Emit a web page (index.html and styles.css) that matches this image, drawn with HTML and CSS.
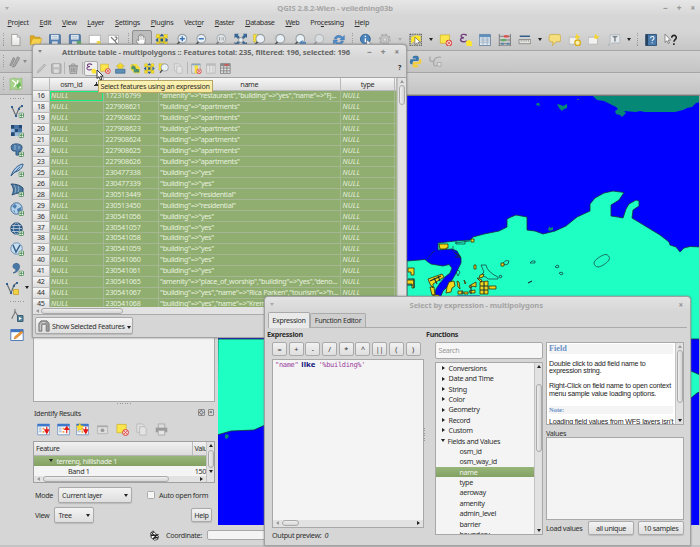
FILE: index.html
```html
<!DOCTYPE html>
<html lang="en">
<head>
<meta charset="utf-8">
<title>QGIS 2.8.2-Wien - veiledning03b</title>
<link rel="stylesheet" href="styles.css">
</head>
<body>
<svg class="defs" aria-hidden="true">
  <defs>
    <linearGradient id="sheet" x2="0" y2="1"><stop offset="0" stop-color="#fff"/><stop offset="1" stop-color="#e4e4e2"/></linearGradient>
    <symbol id="plus" viewBox="0 0 6 6"><rect x=".5" y=".5" width="5" height="5" rx="1" fill="#fff" stroke="#468a52"/><path d="M3 1.3v3.4M1.3 3h3.4" stroke="#3c8248"/></symbol>
    <symbol id="no" viewBox="0 0 8 8"><circle cx="4" cy="4" r="3.4" fill="#f4d4d0" stroke="#d8322e"/><path d="M2 2l4 4M6 2L2 6" stroke="#d8322e" stroke-width=".8"/></symbol>
    <symbol id="doc" viewBox="0 0 14 14"><path d="M2.5 1h6l3 3v9h-9z" fill="url(#sheet)" stroke="#8d8f8c" stroke-width=".8"/><path d="M8.5 1v3h3" fill="#ddd" stroke="#8d8f8c" stroke-width=".6"/></symbol>
    <symbol id="folder" viewBox="0 0 14 14"><path d="M1 12V2.5h4l1 1.5h5.500v2" fill="#e0a91c" stroke="#b78a12" stroke-width=".6"/><path d="M1 12l2.500-6.500h10L11.500 12z" fill="#f7d34f" stroke="#c39a1c" stroke-width=".6"/></symbol>
    <symbol id="save" viewBox="0 0 14 14"><rect x="1" y="1" width="12" height="12" rx="1" fill="#5580ae" stroke="#365f8e" stroke-width=".7"/><rect x="3" y="1.500" width="8" height="5" fill="#edf2f7"/><path d="M4 3h6M4 5h6" stroke="#8da2b8" stroke-width=".7"/><rect x="4" y="8.500" width="6" height="4.500" fill="#d7dee6"/></symbol>
    <symbol id="saveas" viewBox="0 0 14 14"><use href="#save"/><path d="M9 8h5v5H9z" fill="#5ea66c"/></symbol>
    <symbol id="saveg" viewBox="0 0 14 14"><rect x="1" y="1" width="12" height="12" rx="1" fill="#bcbcbc" stroke="#999"/><rect x="3.500" y="1.500" width="7" height="4" fill="#ddd"/><rect x="4" y="8" width="6" height="4.500" fill="#ddd"/></symbol>
    <symbol id="page" viewBox="0 0 14 14"><path d="M1 2h12v9H1z" fill="#fff" stroke="#999" stroke-width=".7"/><path d="M9 8h4v4H9z" fill="#f1d74a"/></symbol>
    <symbol id="pagetool" viewBox="0 0 14 14"><path d="M1 2h11v9H1z" fill="#fff" stroke="#999" stroke-width=".7"/><path d="M4 4l4 4M8 4c2-1 3 1 2 2L8 8l3 4" fill="none" stroke="#777" stroke-width="1.300"/></symbol>
    <symbol id="hand" viewBox="0 0 14 14"><path d="M4 13L1 8c0-1.500 1.500-1.500 2.500.2V3c0-1.300 1.600-1.300 1.600 0V1.800c0-1.300 1.700-1.300 1.700 0v.7c.3-1.200 1.800-1 1.800.3V4c.5-1 1.900-.6 1.900.6V9l-1 4z" fill="#fff" stroke="#777" stroke-width=".8"/><path d="M5.100 3v4M6.900 2.500V7M8.700 3.500V7" stroke="#888" stroke-width=".5"/></symbol>
    <symbol id="pansel" viewBox="0 0 14 14"><path d="M1 1h4v4H1zM9 1h4v4H9zM1 9h4v4H1zM9 9h4v4H9zM4 4h6v6H4z" fill="#f6df2c" stroke="#b9a11b" stroke-width=".4"/><path d="M7 0l2.500 3h-5zM7 14l2.500-3h-5zM0 7l3-2.500v5zM14 7l-3-2.500v5z" fill="#315d8d"/><path d="M5.500 5.500h3v3h-3z" fill="#27537f"/></symbol>
    <symbol id="glass" viewBox="0 0 14 14"><circle cx="7.500" cy="5.700" r="4.700" fill="#e9f1f7" stroke="#98a0a5" stroke-width="1.200"/><path d="M4.500 9L1.500 12.500" stroke="#555" stroke-width="1.800"/></symbol>
    <symbol id="zin" viewBox="0 0 14 14"><use href="#glass"/><path d="M7.500 3v5.400M4.800 5.700h5.400" stroke="#3a75b7" stroke-width="1.600"/></symbol>
    <symbol id="zout" viewBox="0 0 14 14"><use href="#glass"/><path d="M4.800 5.700h5.400" stroke="#3a75b7" stroke-width="1.600"/></symbol>
    <symbol id="zone" viewBox="0 0 14 14"><use href="#glass" opacity=".65"/><path d="M5.500 4v3.500M9.500 4v3.500M7.500 4.500v.7M7.500 6.500v.7" stroke="#888" stroke-width=".9"/></symbol>
    <symbol id="zfull" viewBox="0 0 14 14"><path d="M0 0h5L3.700 1.700 6 4 4 6 1.700 3.700 0 5zM14 0H9l1.300 1.700L8 4l2 2 2.300-2.300L14 5zM0 14h5l-1.300-1.700L6 10 4 8l-2.300 2.300L0 9zM14 14H9l1.300-1.700L8 10l2-2 2.300 2.300L14 9z" fill="#3a6795"/><circle cx="7" cy="7" r="2.500" fill="#e9f1f7" stroke="#999"/></symbol>
    <symbol id="zsel" viewBox="0 0 14 14"><path d="M0 1h8v8H0z" fill="#f6e12f" stroke="#c2a61b" stroke-dasharray="1 1"/><use href="#glass"/></symbol>
    <symbol id="zlay" viewBox="0 0 14 14"><path d="M0 1h3v8H0z" fill="#ccc"/><use href="#glass"/></symbol>
    <symbol id="zlast" viewBox="0 0 14 14"><use href="#glass"/><path d="M6 10l4-3v2h4v3h-4v1.500z" fill="#5488c0"/></symbol>
    <symbol id="refresh" viewBox="0 0 14 14"><path d="M2 6c1-5 7-5 9-2l2-2v5H8l1.500-1.500C8 3.500 5 4 4.500 6zM12 8c-1 5-7 5-9 2l-2 2V7h5L4.500 8.500C6 10.500 9 10 9.500 8z" fill="#4e8bc8" stroke="#3b70a5" stroke-width=".4"/></symbol>
    <symbol id="ident" viewBox="0 0 14 14"><circle cx="6.500" cy="6" r="5.300" fill="#4c82ba" stroke="#356797"/><path d="M6.500 5v4.500M6.500 2.500v1.400" stroke="#fff" stroke-width="1.500"/><path d="M8 7l5 4-2.500.3L12 14l-1 .2-1.200-2.500L8 13z" fill="#fff" stroke="#666" stroke-width=".5"/></symbol>
    <symbol id="gear" viewBox="0 0 14 14"><circle cx="7" cy="6.500" r="4.400" fill="none" stroke="#b1b1b1" stroke-width="1.800"/><circle cx="7" cy="6.500" r="5.900" fill="none" stroke="#aaa" stroke-width="1.200" stroke-dasharray="2 2.600"/><circle cx="7" cy="6.500" r="2" fill="#ddd" stroke="#aaa"/></symbol>
    <symbol id="select" viewBox="0 0 14 14"><path d="M.6.6h12.800v12.800H.6z" fill="#bcbcb4" stroke="#333" stroke-dasharray="1.500 1"/><path d="M2 4l5-2 5 1v6H4l-2 2z" fill="#fbe526"/><path d="M6 4l6 5.500-2.800.2L11 13l-1.500.7-1.500-3.500L6 12z" fill="#fff" stroke="#444" stroke-width=".6"/></symbol>
    <symbol id="desel" viewBox="0 0 14 14"><path d="M1 1.500h10v9H1z" fill="#fbe64b" stroke="#cbac24" stroke-width=".7"/><use href="#no" x="6.500" y="6.500" width="7.500" height="7.500"/></symbol>
    <symbol id="eps" viewBox="0 0 14 14"><path d="M8 2C5-.2 1.300 1 2 3.300c.3 1 1.500 1.300 3 1.200C2.500 4.500 1 5.500 1.300 7c.4 2 4 2.700 6.700.8" fill="none" stroke="#75407f" stroke-width="1.500"/><path d="M7 8.500l3.500-1.500L14 9v4.500H8z" fill="#fbe52e"/></symbol>
    <symbol id="grid" viewBox="0 0 14 14"><path d="M1 1h12v12H1z" fill="#e8eff5" stroke="#67809a"/><path d="M1 1h12v3H1z" fill="#5f8fbd"/><path d="M2 6h10M2 8h10M2 10h10M5 4v9M9.500 4v9" stroke="#8ea4b9" stroke-width=".8"/></symbol>
    <symbol id="abacus" viewBox="0 0 14 14"><path d="M1 .5v13M13 .5v13M1 3h12M1 7h12M1 11h12M0 13.300h14" fill="none" stroke="#77777a"/><path d="M6 2h5v2.300H6z" fill="#dd4d4b"/><path d="M3 6h5v2.300H3z" fill="#60aa68"/><path d="M3 10h3v2H3zM9 10h3v2H9z" fill="#5889ad"/></symbol>
    <symbol id="ruler" viewBox="0 0 14 14"><path d="M1.500 3h11" stroke="#335f8b" stroke-width="1.500"/><path d="M.7 6.500h12.600v4.500H.7z" fill="#e4e4df" stroke="#777" stroke-width=".8"/><path d="M3 7v2M5 7v1.500M7 7v2M9 7v1.500M11 7v2" stroke="#777" stroke-width=".6"/></symbol>
    <symbol id="bubble" viewBox="0 0 14 14"><path d="M3 1h8q2.300 0 2.300 2.300v3.200Q13.300 9 11 9H8l-3.500 4L5 9H3Q.8 9 .8 6.500V3.300Q.8 1 3 1z" fill="#f5de7d" stroke="#c9a83b" stroke-width=".8"/></symbol>
    <symbol id="bookm" viewBox="0 0 14 14"><path d="M1 4h10v7.500H1z" fill="#f1f1ef" stroke="#aaa" stroke-width=".7"/><path d="M9 0l1.500 2.500 2.500 1-3 2.500-3-1z" fill="#f5d532"/></symbol>
    <symbol id="bookn" viewBox="0 0 14 14"><use href="#bookm"/><circle cx="10" cy="10" r="3" fill="#f8efb1" stroke="#d8ae1a" stroke-width="1.400"/></symbol>
    <symbol id="anno" viewBox="0 0 14 14"><path d="M3 1.500h10.500v8.700H5L.8 13 3 9.500z" fill="#e6eaed" stroke="#a2adb5" stroke-width=".8"/><path d="M5.700 3.500h5M8.200 3.500V8.500" stroke="#555e66" stroke-width="1.200"/></symbol>
    <symbol id="book" viewBox="0 0 14 14"><path d="M1.500 1h11.500v12H1.500z" fill="#4b7cae" stroke="#294d73"/><path d="M1.500 1h2.500v12H1.500z" fill="#27425f"/><path d="M6.700 5c0-2.500 4-2.200 3.700 0 0 1.500-2 1.500-2 3M8.400 9.500v1" fill="none" stroke="#fff" stroke-width="1.100"/></symbol>
    <symbol id="what" viewBox="0 0 14 14"><path d="M.7.7v9l2-1.800 1.500 3 1.300-.7-1.500-3h2.800z" fill="#fff" stroke="#555" stroke-width=".7"/><path d="M8 4.500C8 1 13 1.300 12.800 4.500c0 2-2.500 2.300-2.500 4.500M10.300 10.500v1.800" fill="none" stroke="#222" stroke-width="1.700"/></symbol>
    <symbol id="pen" viewBox="0 0 14 14"><path d="M2 12.500l1-3L11 1.300l1.500 1.500L5 11z" fill="#c7c7c7" stroke="#a1a1a1" stroke-width=".9"/></symbol>
    <symbol id="pens" viewBox="0 0 14 14"><path d="M1 11L5 2l2 1-4 8zM4 13L10 1l2.500 1.500L7 12z" fill="#aaa" stroke="#888"/></symbol>
    <symbol id="trash" viewBox="0 0 14 14"><path d="M2 4h10l-1 9.500H3z" fill="#bbb" stroke="#888"/><path d="M1 3.500h12M5 3V1.300h4V3M5 6v5.500M7 6v5.500M9 6v5.500" fill="none" stroke="#888"/></symbol>
    <symbol id="top" viewBox="0 0 14 14"><path d="M1 8h12v5H1z" fill="#5d8eb5" stroke="#456f91"/><path d="M4 7V4H2l5-4 5 4h-2v3z" fill="#f4d82b" stroke="#b89b15" stroke-width=".5"/></symbol>
    <symbol id="inv" viewBox="0 0 14 14"><path d="M1 2l7-1 5 5v7H6L1 8z" fill="#f1db3b"/><path d="M2 4h5v4h5v4H5V8H2z" fill="#4b9370"/><path d="M3 2l8 9" stroke="#38746a"/></symbol>
    <symbol id="copy" viewBox="0 0 14 14"><path d="M2 1h6l2 2v7H2z" fill="#eee" stroke="#999"/><path d="M5 4h5l2 2v7H5z" fill="#f4f4f4" stroke="#999"/></symbol>
    <symbol id="coldel" viewBox="0 0 14 14"><path d="M1 1h11v12H1z" fill="#ddd" stroke="#aaa"/><path d="M5 1h4v12H5z" fill="#f3dd39"/><path d="M1 1h11v2H1z" fill="#86a8c5"/><use href="#no" x="7" y="7" width="7" height="7"/></symbol>
    <symbol id="coladd" viewBox="0 0 14 14"><path d="M1 1h11v12H1z" fill="#e4e4e4" stroke="#b5b5b5"/><path d="M1 1h11v2.500H1z" fill="#bbb"/><path d="M5 3v10M9 3v10" stroke="#bbb"/></symbol>
    <symbol id="calc" viewBox="0 0 14 14"><path d="M.8.8h12.400v12.400H.8z" fill="#e5e5e5" stroke="#777"/><path d="M1 1h12v3H1z" fill="#8a8a8a"/><path d="M6 1.500h5v2H6z" fill="#d8504c"/><path d="M1 6.500h12M1 10h12M5 4v9M9 4v9" stroke="#777"/></symbol>
    <symbol id="mapi" viewBox="0 0 14 14"><path d="M1 2l4-1 4 1 4-1v11l-4 1-4-1-4 1z" fill="#a8d38a" stroke="#8fb57b" stroke-width=".6"/><path d="M3 3l4 3-2 4M9 3l-1 5 4 3" fill="none" stroke="#fff" stroke-width="1.200"/><path d="M7 8l4-3 1 3-3 4z" fill="#68b259"/></symbol>
    <symbol id="vec" viewBox="0 0 14 14"><path d="M2 3l4 9 3-8 3-2" fill="none" stroke="#666d74" stroke-width="1.200"/><path d="M1 2h2v2H1zM5 11h2v2H5zM8 4h2v2H8zM11 1h2v2h-2z" fill="#315f92"/></symbol>
    <symbol id="vecadd" viewBox="0 0 14 14"><use href="#vec"/><use href="#plus" x="8.500" y="8.500" width="5.500" height="5.500"/></symbol>
    <symbol id="rasadd" viewBox="0 0 14 14"><path d="M1 1h11v11H1z" fill="#9bbbdc"/><path d="M1 1h3.700v3.700H1zM8.300 1H12v3.700H8.300zM4.700 4.700h3.600v3.600H4.700zM1 8.300h3.700V12H1z" fill="#234b75"/><path d="M4.700 1h3.600v3.700H4.700zM8.300 4.700H12v3.600H8.300z" fill="#4474a8"/><use href="#plus" x="8.500" y="8.500" width="5.500" height="5.500"/></symbol>
    <symbol id="pgadd" viewBox="0 0 14 14"><path d="M2 2c3-2 8-1 9.500.5C13 5 11 8 10 9l-1-1v4H6V8H3C1 7 .7 3 2 2z" fill="#4e7ba9" stroke="#31577f"/><path d="M5 2v5M9 3v3" stroke="#b3cbe0" stroke-width=".7"/><use href="#plus" x="8.500" y="8.500" width="5.500" height="5.500"/></symbol>
    <symbol id="feather" viewBox="0 0 14 14"><path d="M1 13C3 7 7 2 13 1c0 4-4 7-9 8.500z" fill="#a7c7e4" stroke="#315d8b"/><path d="M1 13L10 4" stroke="#315d8b" stroke-width=".8"/><use href="#plus" x="8.500" y="8.500" width="5.500" height="5.500"/></symbol>
    <symbol id="mssql" viewBox="0 0 14 14"><path d="M1 1c5 0 9 1 12 4v6c-3-2-6-1-11 1 2-4 2-7-1-11z" fill="#4b789f" stroke="#284f75"/><path d="M4 2c2 3 2 5 1 8M8 3c1 2 1 4 0 6" fill="none" stroke="#a7c0d5" stroke-width=".7"/><use href="#plus" x="8.500" y="8.500" width="5.500" height="5.500"/></symbol>
    <symbol id="globe" viewBox="0 0 14 14"><circle cx="6.500" cy="6.500" r="5.700" fill="#b6d2eb" stroke="#466f99"/><path d="M2 4l3-2 2 2-2 3zM7 7l4-2v4l-3 2zM3 8l2 1v2z" fill="#4f80b1"/><use href="#plus" x="8.500" y="8.500" width="5.500" height="5.500"/></symbol>
    <symbol id="globed" viewBox="0 0 14 14"><circle cx="6.500" cy="6.500" r="5.700" fill="#315f8d" stroke="#294e72"/><path d="M1 6.500h11M2 3.500h9M2 9.500h9" stroke="#d7e3ed" stroke-width=".7"/><ellipse cx="6.500" cy="6.500" rx="3" ry="5.500" fill="none" stroke="#d7e3ed" stroke-width=".6"/><use href="#plus" x="8.500" y="8.500" width="5.500" height="5.500"/></symbol>
    <symbol id="globev" viewBox="0 0 14 14"><circle cx="6.500" cy="6.500" r="5.700" fill="#c9deef" stroke="#6f93b5"/><path d="M3 3l3 7 4-7" fill="none" stroke="#345f8b" stroke-width="1.500"/><use href="#plus" x="8.500" y="8.500" width="5.500" height="5.500"/></symbol>
    <symbol id="comma" viewBox="0 0 14 14"><path d="M4 2c4-2 7 1 5 5-1 2-3 4-6 4 2-1 3-2 3-4C3 7 2 4 4 2z" fill="#4878a8" stroke="#31597f" stroke-width=".6"/><use href="#plus" x="8.500" y="8.500" width="5.500" height="5.500"/></symbol>
    <symbol id="vecnew" viewBox="0 0 14 14"><use href="#vec"/><path d="M8.500 8.500h5v5h-5z" fill="#f2d245" stroke="#c2a12b" stroke-width=".8"/></symbol>
    <symbol id="gps" viewBox="0 0 14 14"><path d="M2 11c0-4 3-3 3-9M5 2c0 4 2 3 4 8" fill="none" stroke="#777" stroke-width="1.100"/><circle cx="5" cy="2" r="1.300" fill="#aaa"/><path d="M7.500 7.500H13v6H7.500z" fill="#58849a" stroke="#3b6173"/><path d="M9 9l3 1.500-3 1.500z" fill="#fff"/></symbol>
    <symbol id="edit" viewBox="0 0 14 14"><path d="M.8 1.500h12.400v11H.8z" fill="#fff" stroke="#5580ba"/><path d="M1 1.500h12v2.700H1z" fill="#4076c2"/><path d="M4 11l1-2.500L11.500 3 13 4.500 6.500 10z" fill="#f09a35" stroke="#ba6918" stroke-width=".5"/></symbol>
    <symbol id="python" viewBox="0 0 14 14"><path d="M7 .8c-3 0-3 1-3 3h3.500v.8H2C.5 5 .5 10 2.500 10H4V8c0-1 1-1.500 2-1.500h3c1 0 1.500-.5 1.500-1.500V3C10.500 1 9 .8 7 .8z" fill="#3c77ab"/><path d="M7 13.500c3 0 3-1 3-3H7v-.8h5c1.800-.5 1.800-5.500 0-5.700h-1v2c0 1-1 1.500-2 1.500H6C5 7.500 4 8 4 9v2.500c0 1.500 1 2 3 2z" fill="#f3ce42"/></symbol>
    <symbol id="route" viewBox="0 0 14 14"><path d="M1 1.500v4c0 2 5 2 5 0s3-4 7-3M5 5v5c0 2 2 2 4 1" fill="none" stroke="#aaa" stroke-width="1.400"/><path d="M9 8h4v4H9z" fill="#ddd" stroke="#aaa"/></symbol>
    <symbol id="tree" viewBox="0 0 14 14"><path d="M.7 1.300h12.600v11.400H.7z" fill="#fff" stroke="#7a9bc8"/><path d="M.5 1h13v2.700H.5z" fill="#3d78cb"/><path d="M2 5.500h3M2 7.500h3M2 9.500h3" stroke="#8da5c5"/><path d="M6 5h2v2H6zM6 8.500h2v2H6z" fill="#f09942"/></symbol>
    <symbol id="expand" viewBox="0 0 14 14"><use href="#tree"/><path d="M10.500 4v4M8.500 7.500h4l-2 3.500z" stroke="#e21919" stroke-width="1.300" fill="#e21919"/></symbol>
    <symbol id="collapse" viewBox="0 0 14 14"><use href="#tree"/><path d="M10.500 11V7M8.500 7h4l-2-3z" stroke="#e21919" stroke-width="1.300" fill="#e21919"/></symbol>
    <symbol id="star" viewBox="0 0 14 14"><use href="#expand"/><path d="M4 0l1.300 3 3 .2L6 5.300l.8 3L4 6.700 1.500 8.300l.7-3L0 3.300 3 3z" fill="#ffe12b" stroke="#e1b911" stroke-width=".5"/></symbol>
    <symbol id="form" viewBox="0 0 14 14"><path d="M1.500 3h11v8.500h-11z" fill="#ddd" stroke="#b5b5b5"/><path d="M1.500 3h11v1.500h-11z" fill="#aaa"/><circle cx="7" cy="7.800" r="2" fill="#999"/></symbol>
    <symbol id="print" viewBox="0 0 14 14"><path d="M3.500 1h7v5h-7z" fill="#ddd" stroke="#aaa"/><path d="M.8 5h12.400v5H.8z" fill="#9b9b9b"/><path d="M3.500 8h7v5h-7z" fill="#e4e4e4" stroke="#aaa"/></symbol>
    <symbol id="mouse" viewBox="0 0 14 14"><path d="M2 4l3-3 7 7-1 4-4 1-4-3z" fill="#fff" stroke="#222"/><path d="M3 3l8 8M6 2L3 7l8-1-6 5 7-2" fill="none" stroke="#222" stroke-width="1.300"/></symbol>
    <symbol id="filter" viewBox="0 0 14 14"><path d="M1 13V4l2.500-3h7L13 4v9H9.500V6.500L8.500 5h-3L4.500 6.500V13z" fill="#999" stroke="#777"/><path d="M2.700 12V5l2-2h4" fill="none" stroke="#ddd"/></symbol>
  </defs>
</svg>

<div class="app">
  <header class="titlebar">
    <i class="tri dim"></i><span class="title">QGIS 2.8.2-Wien - veiledning03b</span>
    <span class="wm"><b>−</b><b>+</b><b>×</b></span>
  </header>
  <nav class="menu">
    <span><u>P</u>roject</span><span><u>E</u>dit</span><span><u>V</u>iew</span><span><u>L</u>ayer</span><span><u>S</u>ettings</span><span><u>P</u>lugins</span><span>Vect<u>o</u>r</span><span><u>R</u>aster</span><span><u>D</u>atabase</span><span><u>W</u>eb</span><span>Pro<u>c</u>essing</span><span><u>H</u>elp</span>
  </nav>
  <div class="bar main-bar">
    <i class="grip"></i>
    <svg class="ic"><use href="#doc"/></svg><svg class="ic"><use href="#folder"/></svg><svg class="ic"><use href="#save"/></svg><svg class="ic"><use href="#saveas"/></svg><svg class="ic"><use href="#page"/></svg><svg class="ic"><use href="#pagetool"/></svg>
    <i class="grip wide"></i>
    <svg class="ic pressed"><use href="#hand"/></svg><svg class="ic"><use href="#pansel"/></svg><svg class="ic"><use href="#zin"/></svg><svg class="ic"><use href="#zout"/></svg><svg class="ic"><use href="#zone"/></svg><svg class="ic"><use href="#zfull"/></svg><svg class="ic"><use href="#zsel"/></svg><svg class="ic"><use href="#zlay"/></svg><svg class="ic"><use href="#zlast"/></svg><svg class="ic faded"><use href="#glass"/></svg><svg class="ic"><use href="#refresh"/></svg>
    <i class="grip mid"></i>
    <svg class="ic"><use href="#ident"/></svg><svg class="ic"><use href="#gear"/></svg><i class="drop dim"></i>
    <svg class="ic"><use href="#select"/></svg><i class="drop"></i>
    <svg class="ic"><use href="#desel"/></svg><svg class="ic"><use href="#eps"/></svg><svg class="ic"><use href="#grid"/></svg><svg class="ic"><use href="#abacus"/></svg><svg class="ic"><use href="#ruler"/></svg><i class="drop"></i>
    <svg class="ic"><use href="#bubble"/></svg><svg class="ic"><use href="#bookn"/></svg><svg class="ic"><use href="#bookm"/></svg><svg class="ic"><use href="#anno"/></svg><i class="drop"></i>
    <i class="grip mid"></i>
    <svg class="ic"><use href="#book"/></svg><svg class="ic"><use href="#what"/></svg>
  </div>
  <div class="bar edit-bar"><i class="grip"></i><svg class="ic"><use href="#pens"/></svg><i class="tri"></i><span class="plugins"><svg class="ic"><use href="#python"/></svg><svg class="ic"><use href="#route"/></svg></span></div>
  <div class="bar label-bar"><i class="grip"></i><svg class="ic"><use href="#mapi"/></svg></div>

  <div class="work">
    <aside class="layers-bar">
      <i class="hgrip"></i>
      <svg class="ic"><use href="#vecadd"/></svg><svg class="ic"><use href="#rasadd"/></svg><svg class="ic"><use href="#pgadd"/></svg><svg class="ic"><use href="#feather"/></svg><svg class="ic"><use href="#mssql"/></svg><svg class="ic"><use href="#globe"/></svg><svg class="ic"><use href="#globed"/></svg><svg class="ic"><use href="#globev"/></svg><svg class="ic"><use href="#comma"/></svg>
      <span class="with-drop"><svg class="ic"><use href="#vecnew"/></svg><i class="drop"></i></span>
      <i class="hgrip low"></i>
      <svg class="ic"><use href="#gps"/></svg><svg class="ic"><use href="#edit"/></svg>
    </aside>
    <section class="side">
      <div class="layers"></div>
      <i class="hgrip split"></i>
      <div class="dock-title"><span>Identify Results</span><i>◇</i><i>×</i></div>
      <div class="dock-tools"><svg class="ic"><use href="#expand"/></svg><svg class="ic"><use href="#collapse"/></svg><svg class="ic"><use href="#star"/></svg><svg class="ic"><use href="#form"/></svg><svg class="ic"><use href="#desel"/></svg><svg class="ic faded"><use href="#copy"/></svg><svg class="ic"><use href="#print"/></svg></div>
      <div class="results">
        <div class="r-main">
          <div class="r-head"><span>Feature</span><span>Valu</span></div>
          <div class="r-row on"><i class="tri"></i><span>terreng, hilllshade 1</span></div>
          <div class="r-row band"><span>Band 1</span><span>150</span></div>
          <div class="hscroll"><i class="la"></i><b></b><i class="ra"></i></div>
        </div>
        <div class="vscroll"><i class="ua"></i><b></b><i class="da"></i></div>
      </div>
      <div class="form-row"><span>Mode</span><span class="combo mode">Current layer<i class="drop"></i></span><i class="check"></i><span>Auto open form</span></div>
      <div class="form-row"><span class="lv">View</span><span class="combo view">Tree<i class="drop"></i></span><span class="btn help">Help</span></div>
    </section>
    <svg class="map" viewBox="218 95 481 429" preserveAspectRatio="none">
      <rect x="218" y="95" width="482" height="430" fill="#0000fe"/>
      <path d="M593 95L597 99L604 100L616 106L618 108L615 110L616 113L620 114L622 116L626 112L624 110L636 111L640 110L645 111H675L683 109L687 107L692 106L696 102L700 101V95zM557 103l4 1 2 1 4-2 0 4-3 1-2 2-3-3zM537 102l2 0 1 3-4-1zM577 98h2v.8h-2z" fill="#068877"/>
      <path d="M218 338H407V260L425 258.500L428 261L431 263L443 265L449 263.500L452 267L450 272L445 276L440 282L436 288L435 292L437 297H440L443 290L449 284L455 274L461 262V257L457 250L452 248L438 249V242L455 240L470 239L473 236L484 233L499 230L507 226V218L511 216L516 214L527 216V229L535 230L543 233L555 230L566 225L577 216L590 210V203L595 197L604 192L613 190L624 191.500L619 199L611 204V215L618 216L623 217L626 208L629 203L636 199L639 200V205L633 209L632 217L637 220L660 234L669 241L670 244L676 246L680 251L684 247L690 245.500L702 246V338H691L680 345V368L691 370L698 373L702 376V390L697 392L691 397L600 400L265 424L254 429L231 430L217 434z" fill="#1effc3" stroke="#14343c" stroke-width=".8" stroke-linejoin="round"/>
      <path d="M427 258L433 251L435 250.500M594 262C594 259 603 253 606 253.500C609 254 610 257 609 259C607 262 601 266 598 266C596 266 594 264 594 262zM481 264L486 264L487 267L489 270L494 274L498 276V278H488L486 276L480 275L484 271zM503 262L506 259.500L509 260L508 263L505 264zM530 262L532 260L535 260V262zM555 266L557 264L559 265L558 267zM559 272L562 271L563 273L561 274zM499 275L501 274L502 276L500 277zM456 271L458 269L460 271L458 275zM455 242L470 240M453 245V250L457 254L460 256M456 240V243H465V240" fill="none" stroke="#14343c" stroke-width=".7"/>
      <path d="M548 228l2-3v2l3-1 0 3-4 1z" fill="#068877"/>
      <g fill="#f2d91c" stroke="#352d09" stroke-width=".8">
        <path d="M439 243h9v4h-2v1h-6zM471 238h3v3h-3zM474 264h2v4h-2zM501 262h3v3h-3zM408 267h6v7h-3v-3h-3zM407 279h7v8h-2v-4h-5zM428 278l14-5 2 3-11 7v4l-3-4zM430 286h4l1 8h-3zM449 281l5-1 1 5-3 2-1 4-5 1 1-6zM457 280l2 1 1 7-2-2zM464 279l2 3-1 1zM469 285l7-4v5l-3-1-3 2zM458 290h5v3h-5zM464 291h4v2h-4zM469 290l6-1v3h-5zM480 281l8-1v13h-8zM489 285h7v3h-7zM477 277l5 2-1 2zM480 274l4-1-1 3-4 1zM433 294h6v2h-6z"/>
      </g>
      <path d="M455 252l5 3M455 256h6M408 278h6v9M430 280l11-5M434 277l3 6M438 275l2 5M484 281v12M480 285h8M480 289h8M471 284v9M462 290v3M528 282l4-2M407 284h6" fill="none" stroke="#1b3035" stroke-width="1.100"/>
      <path d="M457 294.500h23v2h-23z" fill="#1428b8"/>
      <path d="M225 434l2-1 2 2-2 3-2-1z" fill="#068877"/>
    </svg>
  </div>
  <footer class="status"><svg class="ic"><use href="#mouse"/></svg><span>Coordinate:</span><i class="field"></i></footer>
</div>

<section class="win attr">
  <div class="win-title"><i class="tri"></i><span>Attribute table - multipolygons :: Features total: 235, filtered: 196, selected: 196</span><span class="wm"><b>−</b><b>+</b><b>×</b></span></div>
  <div class="attr-tools">
    <svg class="ic"><use href="#pen"/></svg><svg class="ic"><use href="#saveg"/></svg><i class="sep"></i><svg class="ic"><use href="#trash"/></svg><i class="sep"></i><svg class="ic lit"><use href="#eps"/></svg><svg class="ic"><use href="#desel"/></svg><svg class="ic"><use href="#top"/></svg><svg class="ic"><use href="#inv"/></svg><svg class="ic"><use href="#pansel"/></svg><svg class="ic"><use href="#zsel"/></svg><svg class="ic faded"><use href="#copy"/></svg><i class="sep"></i><svg class="ic"><use href="#coldel"/></svg><svg class="ic"><use href="#coladd"/></svg><svg class="ic"><use href="#calc"/></svg><span class="q">?</span>
  </div>
  <div class="table-wrap">
    <div class="table-view">
      <table>
        <colgroup><col class="c0"><col class="c1"><col class="c2"><col class="c3"><col class="c4"><col></colgroup>
        <thead><tr><th></th><th class="sorted"><span>osm_id</span></th><th></th><th>name</th><th>type</th><th></th></tr></thead>
        <tbody>
          <tr><th>16</th><td class="focus"><em>NULL</em></td><td>172316799</td><td>"amenity"=&gt;"restaurant","building"=&gt;"yes","name"=&gt;"Fj...</td><td><em>NULL</em></td><td></td></tr>
          <tr><th>18</th><td><em>NULL</em></td><td>227908621</td><td>"building"=&gt;"apartments"</td><td><em>NULL</em></td><td></td></tr>
          <tr><th>19</th><td><em>NULL</em></td><td>227908622</td><td>"building"=&gt;"apartments"</td><td><em>NULL</em></td><td></td></tr>
          <tr><th>20</th><td><em>NULL</em></td><td>227908623</td><td>"building"=&gt;"apartments"</td><td><em>NULL</em></td><td></td></tr>
          <tr><th>21</th><td><em>NULL</em></td><td>227908624</td><td>"building"=&gt;"apartments"</td><td><em>NULL</em></td><td></td></tr>
          <tr><th>22</th><td><em>NULL</em></td><td>227908625</td><td>"building"=&gt;"apartments"</td><td><em>NULL</em></td><td></td></tr>
          <tr><th>23</th><td><em>NULL</em></td><td>227908626</td><td>"building"=&gt;"apartments"</td><td><em>NULL</em></td><td></td></tr>
          <tr><th>25</th><td><em>NULL</em></td><td>230477338</td><td>"building"=&gt;"yes"</td><td><em>NULL</em></td><td></td></tr>
          <tr><th>26</th><td><em>NULL</em></td><td>230477339</td><td>"building"=&gt;"yes"</td><td><em>NULL</em></td><td></td></tr>
          <tr><th>28</th><td><em>NULL</em></td><td>230513449</td><td>"building"=&gt;"residential"</td><td><em>NULL</em></td><td></td></tr>
          <tr><th>29</th><td><em>NULL</em></td><td>230513450</td><td>"building"=&gt;"residential"</td><td><em>NULL</em></td><td></td></tr>
          <tr><th>36</th><td><em>NULL</em></td><td>230541056</td><td>"building"=&gt;"yes"</td><td><em>NULL</em></td><td></td></tr>
          <tr><th>37</th><td><em>NULL</em></td><td>230541057</td><td>"building"=&gt;"yes"</td><td><em>NULL</em></td><td></td></tr>
          <tr><th>38</th><td><em>NULL</em></td><td>230541058</td><td>"building"=&gt;"yes"</td><td><em>NULL</em></td><td></td></tr>
          <tr><th>39</th><td><em>NULL</em></td><td>230541059</td><td>"building"=&gt;"yes"</td><td><em>NULL</em></td><td></td></tr>
          <tr><th>40</th><td><em>NULL</em></td><td>230541060</td><td>"building"=&gt;"yes"</td><td><em>NULL</em></td><td></td></tr>
          <tr><th>41</th><td><em>NULL</em></td><td>230541061</td><td>"building"=&gt;"yes"</td><td><em>NULL</em></td><td></td></tr>
          <tr><th>42</th><td><em>NULL</em></td><td>230541065</td><td>"amenity"=&gt;"place_of_worship","building"=&gt;"yes","deno...</td><td><em>NULL</em></td><td></td></tr>
          <tr><th>44</th><td><em>NULL</em></td><td>230541067</td><td>"building"=&gt;"yes","name"=&gt;"Rica Parken","tourism"=&gt;"h...</td><td><em>NULL</em></td><td></td></tr>
          <tr><th>45</th><td><em>NULL</em></td><td>230541068</td><td>"building"=&gt;"yes","name"=&gt;"Krem</td><td></td><td></td></tr>
        </tbody>
      </table>
    </div>
    <div class="vscroll"><i class="ua"></i><b></b></div>
  </div>
  <div class="hscroll"><i class="la"></i><b></b></div>
  <div class="attr-foot"><span class="btn show"><svg class="ic"><use href="#filter"/></svg><span>Show Selected Features</span><i class="drop"></i></span></div>
</section>

<div class="tooltip">Select features using an expression</div>
<svg class="cursor" viewBox="0 0 8 12"><path d="M1 1v8.500l2-1.800 1.400 3.300 1.500-.7-1.400-3.100h2.700z" fill="#fff" stroke="#222" stroke-width=".9"/></svg>

<section class="win expr">
  <div class="win-title inactive"><i class="tri dim"></i><span>Select by expression - multipolygons</span><span class="wm"><b>×</b></span></div>
  <div class="tabs"><span class="tab on">Expression</span><span class="tab">Function Editor</span></div>
  <div class="expr-body">
    <div class="col-a">
      <h3>Expression</h3>
      <div class="ops"><span>=</span><span>+</span><span>-</span><span>/</span><span>*</span><span>^</span><span>||</span><span>(</span><span>)</span></div>
      <div class="editor"><div class="code"><span>"name"</span><b>like</b><span>'%building%'</span></div><div class="hscroll"><i class="la"></i><b></b><i class="ra"></i></div></div>
      <div class="preview">Output preview: &nbsp;<em>0</em></div>
    </div>
    <i class="vgrip"></i>
    <div class="col-b">
      <h3>Functions</h3>
      <div class="search">Search</div>
      <div class="fn">
        <ul>
          <li>Conversions</li><li>Date and Time</li><li>String</li><li>Color</li><li>Geometry</li><li>Record</li><li>Custom</li><li class="open">Fields and Values</li>
          <li class="leaf">osm_id</li><li class="leaf">osm_way_id</li><li class="leaf on">name</li><li class="leaf">type</li><li class="leaf">aeroway</li><li class="leaf">amenity</li><li class="leaf">admin_level</li><li class="leaf">barrier</li><li class="leaf">boundary</li>
        </ul>
        <div class="vscroll"><i class="ua"></i><b></b><i class="da"></i></div>
      </div>
    </div>
    <div class="col-c">
      <div class="doc">
        <div class="doc-text"><h4>Field</h4><p>Double click to add field name to<br>expression string.</p><p>Right-Click on field name to open context<br>menu sample value loading options.</p><h5>Note:</h5><p>Loading field values from WFS layers isn't</p></div>
        <div class="vscroll"><i class="ua"></i><b></b><i class="da"></i></div>
      </div>
      <div class="v-label">Values</div>
      <div class="values"></div>
      <div class="load"><span>Load values</span><span class="btn">all unique</span><span class="btn">10 samples</span></div>
    </div>
  </div>
</section>
</body>
</html>
```
FILE: styles.css
```css
* { box-sizing: border-box; }
body { margin: 0; width: 700px; height: 547px; overflow: hidden; position: relative; background: #d6d6d6; color: #303030; font: 7.2px/10px "Noto Sans", "Open Sans", sans-serif; letter-spacing: -.32px; white-space: nowrap; }
i { font-style: normal; display: block; flex: none; }
.defs { position: absolute; width: 0; height: 0; }
.ic { display: block; flex: none; width: 12px; height: 12px; }
.faded { opacity: .45; }
u { text-underline-offset: 1px; text-decoration-thickness: .6px; }

.tri, .drop { width: 0; height: 0; border: 2.2px solid transparent; border-top: 3px solid #888; border-bottom: 0; }
.drop { border-top-color: #222; }
.dim { border-top-color: #aaa; }
.grip { width: 2px; height: 14px; background: repeating-linear-gradient(#999 0 1px, transparent 1px 2.300px); background-size: 1px 100%; background-repeat: no-repeat; }
.hgrip { width: 14px; height: 1px; background: repeating-linear-gradient(90deg, #999 0 1px, transparent 1px 2.600px); }

.app { height: 547px; display: flex; flex-direction: column; }
.titlebar { height: 15px; background: linear-gradient(#e6e6e6, #d7d7d7); display: flex; align-items: center; padding: 1px 5px 0; color: #a6a6a6; font-weight: bold; font-size: 7.600px; letter-spacing: -.11px; }
.title { flex: 1; text-align: center; padding-right: 2px; }
.wm { display: flex; gap: 9px; color: #999; font: bold 8px/10px "Noto Sans", sans-serif; }
.wm b { width: 4.600px; text-align: center; letter-spacing: 0; }
.menu { height: 15px; display: flex; padding: 1px 0 0 7.500px; gap: 10.850px; line-height: 12px; }
.bar { display: flex; align-items: center; background: linear-gradient(#d4d4d4, #c4c4c4); border-bottom: 1px solid #a6a6a6; flex: none; }
.main-bar { height: 21px; padding: 0 0 1px 3px; background: linear-gradient(#d6d6d6, #c6c6c6); }
.main-bar .ic { width: 19.700px; padding: 3.500px 3.200px; height: 20px; }
.main-bar .grip { margin-right: 1px; }
.main-bar .grip.wide { margin: 0 2px 0 4px; }
.main-bar .grip.mid { margin: 0 2px 0 3px; }
.main-bar .drop { margin: 0 3.300px; }
.main-bar .ic.pressed { background: #bcbcbc; border: 1px solid #8e8e8e; border-radius: 2px; padding: 2.500px 2.200px; }
.edit-bar { height: 22px; padding-left: 3px; }
.edit-bar .ic { margin-left: 4px; }
.edit-bar .tri { margin-left: 2px; }
.plugins { display: flex; gap: 3px; margin-left: 378px; }
.plugins .ic { width: 13px; height: 13px; }
.label-bar { height: 22px; padding-left: 3px; }
.label-bar .ic { margin-left: 4px; width: 14px; height: 14px; }
.work { display: flex; height: 430px; }
.layers-bar { width: 33px; display: flex; flex-direction: column; padding: 3px 0 0 9.500px; }
.layers-bar .ic { width: 14px; height: 14px; margin-bottom: 5.700px; }
.layers-bar .hgrip { margin-bottom: 5px; }
.layers-bar .low { margin: 0 0 6px; }
.with-drop { display: flex; margin-left: -5px; }
.with-drop .drop { margin: 5px 0 0 6px; }

.side { width: 182px; }
.layers { height: 307px; background: #f3f3f3; border: 1px solid #a8a8a8; border-top: 0; }
.split { margin: 1px auto 0; }
.dock-title { display: flex; align-items: center; height: 15px; padding: 2px 1px 0; }
.dock-title span { flex: 1; }
.dock-title i { width: 6.500px; height: 6.500px; border: .8px solid #888; border-radius: 1px; margin-left: 3px; font: bold 6px/5px "Noto Sans", sans-serif; text-align: center; color: #555; letter-spacing: 0; }
.dock-tools { display: flex; align-items: center; height: 20px; padding: 0 4px; gap: 6.700px; }
.dock-tools .ic { width: 13px; height: 13px; }
.results { display: flex; height: 42.500px; margin-top: 1.500px; border: 1px solid #a0a0a0; background: #f4f4f4; }
.r-main { flex: 1; min-width: 0; overflow: hidden; }
.r-head { display: flex; height: 14px; line-height: 13px; background: linear-gradient(#f1f1f1, #dcdcdc); border-bottom: 1px solid #b5b5b5; }
.r-head span { width: 159px; padding-left: 2px; border-right: 1px solid #bbb; flex: none; }
.r-head span + span { width: auto; border: 0; padding-left: 1.500px; letter-spacing: -.4px; }
.r-row { display: flex; align-items: center; height: 10px; }
.r-row.on { background: linear-gradient(#98b57a, #83a162); color: #eef3e8; padding-left: 15px; }
.r-row.on .tri { border-top-color: #222; margin-right: 3.500px; }
.band { padding-left: 34px; }
.band span:first-child { width: 127px; }

.hscroll { height: 6.500px; display: flex; align-items: center; background: #e2e2e2; }
.hscroll b, .vscroll b { display: block; background: linear-gradient(#eee, #d6d6d6); border: 1px solid #aaa; border-radius: 3px; }
.hscroll b { height: 6px; width: 126px; }
.la, .ra { width: 0; height: 0; border: 2px solid transparent; border-right: 3px solid #999; border-left: 0; margin: 0 3px; }
.ra { border-left: 3.500px solid #222; border-right: 0; margin-left: auto; }
.vscroll { width: 8px; background: #e1e1e1; border-left: 1px solid #c4c4c4; display: flex; flex-direction: column; align-items: center; flex: none; }
.vscroll b { width: 6px; background: linear-gradient(90deg, #eee, #d4d4d4); }
.ua, .da { width: 0; height: 0; border: 2px solid transparent; border-bottom: 3px solid #222; border-top: 0; margin: 2px 0; }
.da { border-top: 3px solid #222; border-bottom: 0; margin-top: auto; }
.results .vscroll b { height: 18px; margin-top: 1px; }
.results .da { margin-bottom: 9px; }

.form-row { display: flex; align-items: center; padding: 0 3px 0 2px; height: 16px; margin-top: 4px; }
.combo, .btn { display: flex; align-items: center; background: linear-gradient(#f3f3f3, #dedede); border: 1px solid #aaa; border-radius: 2px; box-shadow: 0 .5px 1px #bbb; }
.combo { height: 16.500px; padding: 0 3px; justify-content: space-between; }
.mode { width: 74px; margin-left: 5px; }
.view { width: 40px; margin-left: 5px; }
.check { width: 8px; height: 8px; background: #f6f6f6; border: 1px solid #aaa; border-radius: 1.500px; margin: 0 4px 0 15px; }
.help { height: 14px; width: 21px; margin-left: auto; justify-content: center; }
.map { width: 482px; height: 430px; margin-left: 3px; border-top: 1px solid #777; border-right: 1px solid #aaa; flex: none; }
.status { height: 22px; display: flex; align-items: center; padding-left: 149px; border-bottom: 2px solid #c4c4c4; }
.status .ic { width: 11px; height: 11px; margin-right: 6px; }
.status .field { width: 200px; height: 10px; margin-left: 5px; background: #f4f4f4; border: 1px solid #a8a8a8; border-radius: 2px; }

.win { position: absolute; background: #d6d6d6; border: 1px solid #a2a2a2; border-radius: 4px 4px 0 0; box-shadow: 0 0 2px #777; display: flex; flex-direction: column; }
.win-title { height: 13px; display: flex; align-items: center; padding: 0 7px 0 5px; font-weight: bold; font-size: 7.600px; letter-spacing: -.12px; color: #666; background: linear-gradient(#e4e4e4, #d6d6d6); border-radius: 4px 4px 0 0; }
.win-title > span:nth-child(2) { flex: 1; text-align: center; }
.attr { left: 32px; top: 44px; width: 375px; height: 294px; }
.attr .wm { color: #888; }
.attr .win-title > span:nth-child(2) { text-align: left; padding-left: 20px; }
.attr-tools { height: 19px; display: flex; align-items: center; padding: 1px 5px 0 1px; }
.attr-tools .ic { width: 14.600px; height: 13px; padding: 1px 1.500px; }
.attr-tools .lit { background: #efefef; border: 1px solid #aaa; border-radius: 2px; padding: 1px 1px; height: 15px; }
.sep { width: 1px; height: 12px; background: #b3b3b3; margin: 0 1px; }
.q { margin-left: auto; font-weight: bold; font-size: 7px; }
.table-wrap { display: flex; height: 230px; border-top: 1px solid #a4a4a4; }
.table-view { width: 364px; overflow: hidden; }
table { table-layout: fixed; width: 364px; border-collapse: separate; border-spacing: 0; }
.c0 { width: 16.500px; } .c1 { width: 54.500px; } .c2 { width: 54.500px; } .c3 { width: 182.500px; } .c4 { width: 54px; }
th { padding: 0; font-weight: normal; background: linear-gradient(#f6f6f6, #dcdcdc); border-right: 1px solid #b9b9b9; border-bottom: 1px solid #b9b9b9; }
thead th { height: 13px; line-height: 11px; }
tbody th, td { height: 10.930px; line-height: 9px; }
td { padding: 0 0 0 1.500px; background: #8fae70; color: #e8f0df; border-right: 1px solid #a5b792; border-bottom: 1px solid #a5b792; overflow: hidden; letter-spacing: -.29px; }
td em { letter-spacing: .2px; }
td:nth-child(3) { letter-spacing: -.21px; }
td.focus { box-shadow: inset 0 0 0 1px #14ef7c; }
.sorted { background-image: conic-gradient(from 150deg at 50% 0, #333 60deg, transparent 0), linear-gradient(#f6f6f6, #dcdcdc); background-size: 5px 4px, 100% 100%; background-position: right 4px center, 0 0; background-repeat: no-repeat; }
.sorted span { margin-right: 10px; }
.table-wrap .vscroll { width: 9px; }
.table-wrap .vscroll b { height: 20px; }
.attr > .hscroll { height: 8px; border-bottom: 1px solid #aaa; padding-right: 9px; flex: none; }
.attr > .hscroll b { width: 82px; }
.attr > .hscroll .la { margin: 0 2.500px; }
.attr-foot { padding: 2px; }
.btn.show { width: 97.500px; height: 17px; padding: 0 1px 0 2px; gap: 2px; }
.show .ic { height: 12px; }
.show .drop { margin: 3px 0 0 auto; }

.tooltip { position: absolute; left: 98px; top: 80px; width: 115px; height: 13px; padding: 0 1.500px; line-height: 11.500px; letter-spacing: -.28px; background: linear-gradient(#fbf2b4, #f7e79c); border: 1px solid #b5a566; }
.cursor { position: absolute; left: 96px; top: 69px; width: 8px; height: 12px; }

.expr { left: 264px; top: 296px; width: 427px; height: 250px; }
.inactive { height: 15px; color: #a5a5a5; background: linear-gradient(#e2e2e2, #d6d6d6); }
.tabs { display: flex; align-items: flex-end; height: 16px; margin: 0 3px; border-bottom: 1px solid #aaa; }
.tab { height: 14px; line-height: 12px; width: 56px; text-align: center; border: 1px solid #aaa; border-bottom: 0; border-radius: 2px 2px 0 0; background: #cfcfcf; }
.tab.on { width: 42px; height: 16px; margin-bottom: -1px; background: #e9e9e9; line-height: 14px; }
.expr-body { display: flex; padding-top: 1px; }
h3, h4, h5, p, ul { margin: 0; padding: 0; }
h3 { font-size: 7.200px; height: 12.500px; line-height: 11px; }
.col-a { width: 152px; margin-left: 7px; }
.col-a h3 { margin-left: -5px; letter-spacing: -.27px; }
.ops { display: flex; gap: 1.700px; height: 17px; }
.ops span { width: 15px; height: 14.500px; border: 1px solid #aaa; border-radius: 2px; background: linear-gradient(#f1f1f1, #dedede); text-align: center; line-height: 12px; letter-spacing: 0; }
.editor { height: 169px; border: 1px solid #a8a8a8; background: #f4f4f4; display: flex; flex-direction: column; justify-content: space-between; }
.editor .hscroll b { width: 17px; }
.code { display: flex; padding: 0 2px; color: #9b3d9c; font: 7px/10px "DejaVu Sans Mono", "Liberation Mono", monospace; letter-spacing: -.33px; }
.code b { color: #14147c; font: bold 7.800px/9.500px "Noto Sans", sans-serif; letter-spacing: 0; margin: 0 3px; }
.preview { padding-top: 2.500px; }
.vgrip { width: 1px; height: 14px; margin: 99px 5px 0 0; background: repeating-linear-gradient(#999 0 1px, transparent 1px 2.500px); }
.col-b { width: 108px; }
.col-b h3 { margin-left: -9px; }
.col-a + .vgrip + .col-b { margin-left: 5px; }
.search { height: 17px; padding: 0 2.500px; line-height: 15px; background: #f6f6f6; border: 1px solid #a8a8a8; border-radius: 2px; color: #999; }
.fn { height: 173px; margin-top: 3.500px; display: flex; border: 1px solid #a8a8a8; background: #f4f4f4; overflow: hidden; }
.fn ul { flex: 1; list-style: none; overflow: hidden; }
.fn li { height: 10.380px; line-height: 10.400px; padding-left: 12.500px; display: flex; align-items: center; }
.fn li::before { content: ""; border: 2.200px solid transparent; border-left: 3px solid #222; border-right: 0; margin: 0 4px 0 -7px; }
.fn li.open::before { border: 2.500px solid transparent; border-top: 3px solid #222; border-bottom: 0; margin: 0 3px 0 -8px; }
.fn li.leaf { padding-left: 23.500px; }
.fn li.leaf::before { display: none; }
.fn li.on { background: linear-gradient(#98b57a, #83a162); color: #eef3e8; }
.fn .vscroll b { height: 68px; margin-top: 14px; }
.col-c { width: 138px; margin-left: 3px; padding-top: 12.500px; }
.doc { height: 83px; display: flex; border: 1px solid #a8a8a8; background: #fff; overflow: hidden; }
.doc-text { flex: 1; padding: 1.500px 2px; overflow: hidden; font: 7.100px/7.800px "Liberation Sans", Arial, sans-serif; letter-spacing: -.18px; color: #222; }
.doc-text h4, .doc-text h5 { font: bold 8.200px/9.500px "Liberation Serif", serif; color: #6a92c8; background: #f4f4f4; margin-bottom: 7px; letter-spacing: 0; }
.doc-text h5 { font-size: 6.500px; line-height: 7.500px; margin-bottom: 5.500px; }
.doc-text p { margin-bottom: 7.300px; }
.doc .vscroll b { height: 53px; }
.doc .ua, .table-wrap .ua { border-bottom-color: #999; }
.v-label { height: 12px; line-height: 16px; }
.values { height: 83.500px; border: 1px solid #a8a8a8; background: #f4f4f4; }
.load { display: flex; align-items: center; height: 15px; padding-top: 1px; }
.load > span:first-child { flex: 1; }
.load .btn { height: 13.500px; width: 46px; margin-left: 4px; justify-content: center; }
```
